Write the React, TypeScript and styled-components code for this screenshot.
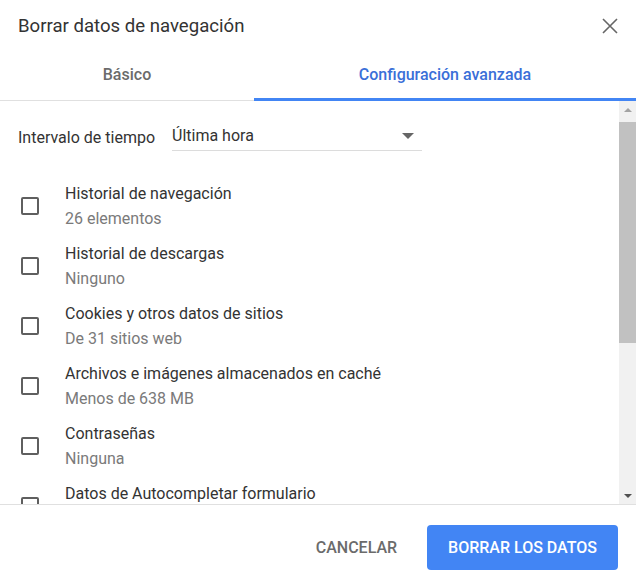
import React from 'react'
import styled, { createGlobalStyle } from 'styled-components'

const GlobalStyle = createGlobalStyle`
  html, body {
    margin: 0;
    padding: 0;
    background: #ffffff;
  }
  body {
    font-family: Roboto, 'Liberation Sans', Arial, sans-serif;
  }
`

const Dialog = styled.div`
  width: 636px;
  height: 586px;
  display: flex;
  flex-direction: column;
  background: #ffffff;
  overflow: hidden;
`

const Header = styled.header`
  height: 50px;
  display: flex;
  align-items: center;
  justify-content: space-between;
  padding: 1px 16px 0 18px;
  box-sizing: border-box;
`

const Title = styled.h1`
  margin: 0;
  font-size: 18.6px;
  font-weight: 400;
  color: #333333;
`

const CloseButton = styled.button`
  border: none;
  background: none;
  padding: 0;
  width: 20px;
  height: 20px;
  display: flex;
  align-items: center;
  justify-content: center;
  cursor: pointer;
`

const Tabs = styled.nav`
  height: 50px;
  display: flex;
  border-bottom: 1px solid #e0e0e0;
`

const Tab = styled.div<{ $active?: boolean }>`
  flex: 1;
  display: flex;
  align-items: center;
  justify-content: center;
  font-size: 16px;
  font-weight: 500;
  color: ${p => (p.$active ? '#3a6fd8' : '#6b6b6b')};
  border-bottom: 3px solid ${p => (p.$active ? '#4285f4' : 'transparent')};
  margin-bottom: -1px;
  &:first-child {
    flex: 0 0 254px;
  }
`

const Body = styled.div`
  flex: 1;
  display: flex;
  min-height: 0;
`

const Content = styled.div`
  flex: 1;
  overflow: hidden;
  padding: 16px 0 0 18px;
`

const IntervalRow = styled.div`
  height: 40px;
  display: flex;
  align-items: center;
  margin-bottom: 19px;
`

const IntervalLabel = styled.span`
  font-size: 16px;
  color: #333333;
  width: 154px;
`

const Select = styled.div`
  width: 250px;
  height: 28px;
  box-sizing: border-box;
  display: flex;
  align-items: center;
  justify-content: space-between;
  border-bottom: 1px solid #dcdcdc;
  font-size: 16px;
  color: #333333;
  padding: 0 8px 2px 0;
`

const Item = styled.div`
  height: 60px;
  display: flex;
  align-items: center;
`

const Checkbox = styled.span`
  width: 18px;
  height: 18px;
  box-sizing: border-box;
  border: 2px solid #5f5f5f;
  border-radius: 2px;
  margin: 0 26px 0 3px;
  flex: none;
`

const ItemText = styled.div`
  display: flex;
  flex-direction: column;
`

const ItemTitle = styled.span`
  font-size: 16px;
  line-height: 25px;
  color: #333333;
`

const ItemSub = styled.span`
  font-size: 16px;
  line-height: 25px;
  color: #7a7a7a;
`

const ScrollTrack = styled.div`
  width: 17px;
  background: #f1f1f1;
  display: flex;
  flex-direction: column;
  align-items: center;
`

const ScrollArrow = styled.div`
  height: 17px;
  width: 17px;
  display: flex;
  align-items: center;
  justify-content: center;
  flex: none;
`

const ScrollThumb = styled.div`
  width: 17px;
  height: 221px;
  margin-top: 4px;
  background: #c1c1c1;
`

const ScrollSpacer = styled.div`
  flex: 1;
`

const Footer = styled.footer`
  height: 82px;
  box-sizing: border-box;
  border-top: 1px solid #e0e0e0;
  display: flex;
  justify-content: flex-end;
  align-items: flex-start;
  gap: 9px;
  padding: 20px 18px 0 0;
`

const Button = styled.button<{ $primary?: boolean }>`
  height: 45px;
  border: none;
  border-radius: 4px;
  font-family: Roboto, 'Liberation Sans', Arial, sans-serif;
  font-size: 16px;
  font-weight: 500;
  text-transform: uppercase;
  padding: 0 21px;
  cursor: pointer;
  background: ${p => (p.$primary ? '#4285f4' : 'transparent')};
  color: ${p => (p.$primary ? '#ffffff' : '#6b6b6b')};
`

const items = [
  { title: 'Historial de navegación', sub: '26 elementos' },
  { title: 'Historial de descargas', sub: 'Ninguno' },
  { title: 'Cookies y otros datos de sitios', sub: 'De 31 sitios web' },
  { title: 'Archivos e imágenes almacenados en caché', sub: 'Menos de 638 MB' },
  { title: 'Contraseñas', sub: 'Ninguna' },
  { title: 'Datos de Autocompletar formulario', sub: 'Ninguno' }
]

function App () {
  return (
    <>
      <GlobalStyle />
      <Dialog>
        <Header>
          <Title>Borrar datos de navegación</Title>
          <CloseButton aria-label="Cerrar">
            <svg width="16" height="16" viewBox="0 0 16 16">
              <path d="M1 1L15 15M15 1L1 15" stroke="#666" strokeWidth="1.6" />
            </svg>
          </CloseButton>
        </Header>
        <Tabs>
          <Tab>Básico</Tab>
          <Tab $active>Configuración avanzada</Tab>
        </Tabs>
        <Body>
          <Content>
            <IntervalRow>
              <IntervalLabel>Intervalo de tiempo</IntervalLabel>
              <Select>
                <span>Última hora</span>
                <svg width="12" height="6" viewBox="0 0 12 6">
                  <path d="M0 0H12L6 6Z" fill="#666" />
                </svg>
              </Select>
            </IntervalRow>
            {items.map(({ title, sub }) => (
              <Item key={title}>
                <Checkbox />
                <ItemText>
                  <ItemTitle>{title}</ItemTitle>
                  <ItemSub>{sub}</ItemSub>
                </ItemText>
              </Item>
            ))}
          </Content>
          <ScrollTrack>
            <ScrollArrow>
              <svg width="8" height="4" viewBox="0 0 8 4">
                <path d="M0 4H8L4 0Z" fill="#a3a3a3" />
              </svg>
            </ScrollArrow>
            <ScrollThumb />
            <ScrollSpacer />
            <ScrollArrow>
              <svg width="8" height="4" viewBox="0 0 8 4">
                <path d="M0 0H8L4 4Z" fill="#505050" />
              </svg>
            </ScrollArrow>
          </ScrollTrack>
        </Body>
        <Footer>
          <Button>Cancelar</Button>
          <Button $primary>Borrar los datos</Button>
        </Footer>
      </Dialog>
    </>
  )
}

export default App
